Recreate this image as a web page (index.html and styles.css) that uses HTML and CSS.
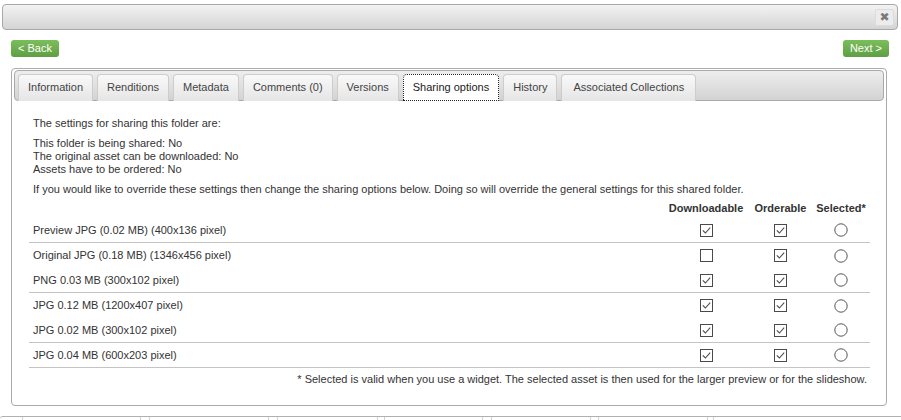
FILE: index.html
```html
<!DOCTYPE html>
<html>
<head>
<meta charset="utf-8">
<link rel="stylesheet" href="styles.css">
</head>
<body>
<svg class="defs" width="0" height="0">
  <symbol id="chk" viewBox="0 0 13 13"><rect x="0.5" y="0.5" width="12" height="12" fill="#fff" stroke="#4a4a4a"/><path d="M2.8 6.3 L5.4 9 L10.2 3.6" fill="none" stroke="#4d4d4d" stroke-width="1.1"/></symbol>
  <symbol id="box" viewBox="0 0 13 13"><rect x="0.5" y="0.5" width="12" height="12" fill="#fff" stroke="#4a4a4a"/></symbol>
  <symbol id="rad" viewBox="0 0 14 14"><circle cx="7" cy="7" r="6.2" fill="#fff" stroke="#555"/></symbol>
</svg>
<div class="titlebar"><span class="close">✖</span></div>
<div class="nav"><a class="btn">&lt; Back</a><a class="btn">Next &gt;</a></div>
<div class="panel">
  <ul class="tabs">
    <li>Information</li>
    <li>Renditions</li>
    <li>Metadata</li>
    <li>Comments (0)</li>
    <li>Versions</li>
    <li class="active">Sharing options</li>
    <li>History</li>
    <li class="wide">Associated Collections</li>
  </ul>
  <div class="content">
    <p>The settings for sharing this folder are:</p>
    <p>This folder is being shared: No<br>The original asset can be downloaded: No<br>Assets have to be ordered: No</p>
    <p class="last">If you would like to override these settings then change the sharing options below. Doing so will override the general settings for this shared folder.</p>
    <div class="table">
      <div class="row head"><span class="label"></span><span class="c dl">Downloadable</span><span class="c or">Orderable</span><span class="c se">Selected*</span></div>
      <div class="row sep"><span class="label">Preview JPG (0.02 MB) (400x136 pixel)</span><span class="c dl"><svg class="cb"><use href="#chk"/></svg></span><span class="c or"><svg class="cb"><use href="#chk"/></svg></span><span class="c se"><svg class="rb"><use href="#rad"/></svg></span></div>
      <div class="row"><span class="label">Original JPG (0.18 MB) (1346x456 pixel)</span><span class="c dl"><svg class="cb"><use href="#box"/></svg></span><span class="c or"><svg class="cb"><use href="#chk"/></svg></span><span class="c se"><svg class="rb"><use href="#rad"/></svg></span></div>
      <div class="row sep"><span class="label">PNG 0.03 MB (300x102 pixel)</span><span class="c dl"><svg class="cb"><use href="#chk"/></svg></span><span class="c or"><svg class="cb"><use href="#chk"/></svg></span><span class="c se"><svg class="rb"><use href="#rad"/></svg></span></div>
      <div class="row"><span class="label">JPG 0.12 MB (1200x407 pixel)</span><span class="c dl"><svg class="cb"><use href="#chk"/></svg></span><span class="c or"><svg class="cb"><use href="#chk"/></svg></span><span class="c se"><svg class="rb"><use href="#rad"/></svg></span></div>
      <div class="row sep"><span class="label">JPG 0.02 MB (300x102 pixel)</span><span class="c dl"><svg class="cb"><use href="#chk"/></svg></span><span class="c or"><svg class="cb"><use href="#chk"/></svg></span><span class="c se"><svg class="rb"><use href="#rad"/></svg></span></div>
      <div class="row sep"><span class="label">JPG 0.04 MB (600x203 pixel)</span><span class="c dl"><svg class="cb"><use href="#chk"/></svg></span><span class="c or"><svg class="cb"><use href="#chk"/></svg></span><span class="c se"><svg class="rb"><use href="#rad"/></svg></span></div>
    </div>
    <p class="note">* Selected is valid when you use a widget. The selected asset is then used for the larger preview or for the slideshow.</p>
  </div>
</div>
<div class="footer">
  <span></span><span></span><span></span><span></span><span></span><span></span><span></span><span></span><span></span><span></span><span></span><span></span><span></span><span></span>
</div>
</body>
</html>
```

FILE: styles.css
```css
* { box-sizing: border-box; }
html, body { margin: 0; padding: 0; }
body {
  width: 901px;
  height: 420px;
  overflow: hidden;
  background: #fff;
  font: 11px/13px "Liberation Sans", Arial, sans-serif;
  color: #333;
}
.defs { position: absolute; width: 0; height: 0; }

.titlebar {
  margin: 4px 3px 0 2px;
  height: 26px;
  border: 1px solid #a8a8a8;
  border-radius: 4px;
  background: linear-gradient(#f3f3f3, #d4d4d4);
  display: flex;
  justify-content: flex-end;
  align-items: center;
  padding-right: 3px;
}
.close {
  width: 19px;
  height: 17px;
  margin-top: 1px;
  border-radius: 2px;
  background: #ececec;
  border: 1px solid #dcdcdc;
  color: #7a7a7a;
  font-size: 12px;
  line-height: 15px;
  text-align: center;
  font-family: "DejaVu Sans", sans-serif;
}

.nav {
  display: flex;
  justify-content: space-between;
  margin: 10px 12px 0 11px;
}
.btn {
  display: block;
  height: 17px;
  padding: 0 7px;
  line-height: 17px;
  color: #fff;
  font-size: 11px;
  border-radius: 3px;
  background: linear-gradient(#7cbd5b, #5f9f45);
}

.panel {
  margin: 11px 14px 0 11px;
  height: 338px;
  border: 1px solid #ababab;
  border-radius: 4px;
  padding: 1px 2px 2px 2px;
}
.tabs {
  list-style: none;
  margin: 0;
  padding: 3px 2px 0 3px;
  height: 31px;
  display: flex;
  gap: 4px;
  border: 1px solid #a9a9a9;
  border-radius: 4px;
  background: linear-gradient(#eeeeee, #d2d2d2);
}
.tabs li {
  height: 27px;
  margin-bottom: -1px;
  padding: 0 9px;
  line-height: 25px;
  color: #444;
  border: 1px solid #cdcdcd;
  border-bottom: none;
  border-radius: 4px 4px 0 0;
  background: linear-gradient(#f9f9f9, #e5e5e5);
}
.tabs li.active {
  background: #fff;
  color: #222;
  border: 1px dotted #222;
  padding: 0 9px;
}
.tabs li.wide { padding: 0 11px; }

.content {
  padding: 16px 13px 0 15px;
}
.content p {
  margin: 0 0 7px 0;
  padding-left: 4px;
}
.content p.last { margin-bottom: 0; }
.table { width: 841px; }
.row {
  display: flex;
  align-items: center;
  height: 25px;
}
.row.sep { border-bottom: 1px solid #c4c4c4; }
.row.head {
  height: 22px;
  padding-top: 3px;
  font-weight: bold;
  color: #333;
}
.label { flex: 1; padding-left: 4px; }
.c { text-align: center; display: flex; justify-content: center; align-items: center; }
.dl { width: 86px; }
.or { width: 63px; }
.se { width: 58px; }
.cb { width: 13px; height: 13px; }
.rb { width: 14px; height: 14px; }
.content p.note {
  margin-top: 5px;
  text-align: right;
  padding-right: 4px;
}

.footer {
  margin-top: 10px;
  height: 4px;
  border-top: 1px solid #b0b0b0;
  border-radius: 3px 0 0 0;
  display: grid;
  grid-template-columns: 22px 118px 9px 119px 9px 100px 7px 98px 9px 99px 8px 109px 6px 1fr;
}
.footer span { border-left: 1px solid #d0d0d0; }
.footer span:first-child { border-left: none; }
```
